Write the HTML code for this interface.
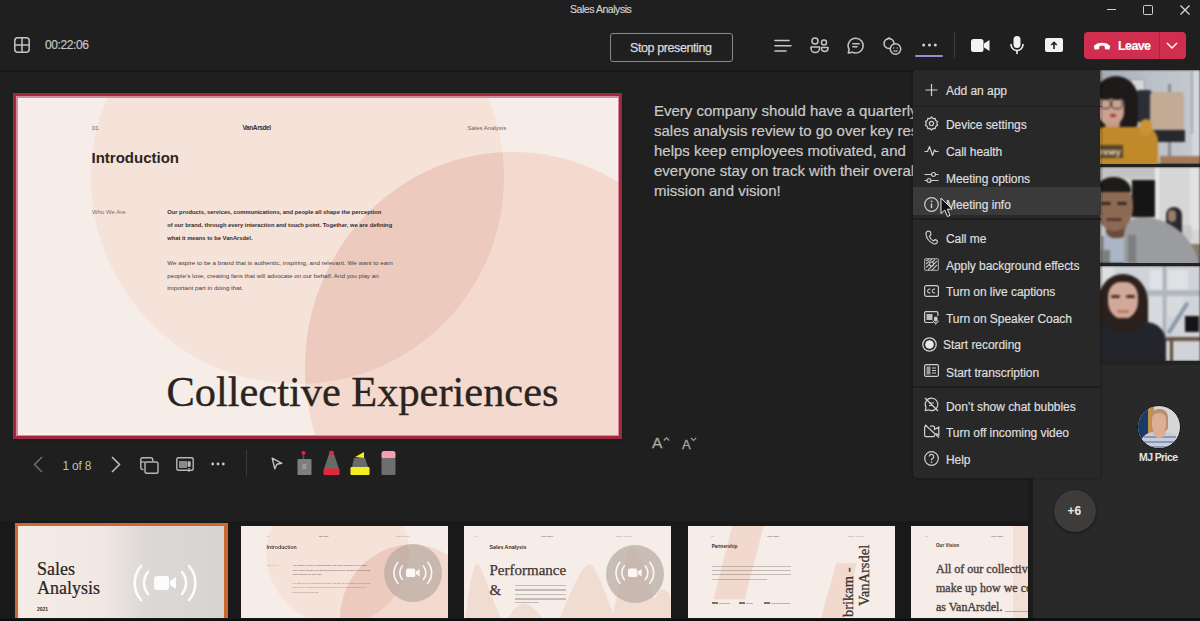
<!DOCTYPE html>
<html><head><meta charset="utf-8">
<style>
*{box-sizing:border-box;margin:0;padding:0}
html,body{width:1200px;height:621px;overflow:hidden;background:#1f1f1f;font-family:"Liberation Sans",sans-serif;position:relative}
.a{position:absolute}
.t{position:absolute;white-space:nowrap;line-height:1}
svg{position:absolute;overflow:visible}
</style></head><body>

<!-- top bar -->
<div class="a" style="left:0;top:0;width:1200px;height:70px;background:#1f1f1f"></div>
<div class="a" style="left:0;top:70px;width:1200px;height:2px;background:#161616"></div>
<div class="t" style="left:570px;top:4px;font-size:10.5px;color:#d4d4d4;letter-spacing:-0.45px;-webkit-text-stroke:0.15px #d4d4d4">Sales Analysis</div>

<!-- window controls -->
<div class="a" style="left:1107px;top:9px;width:9px;height:1.3px;background:#d0d0d0"></div>
<div class="a" style="left:1143px;top:5px;width:10px;height:10px;border:1.3px solid #d0d0d0;border-radius:1.5px"></div>
<svg style="left:1180px;top:5px" width="10" height="10" viewBox="0 0 10 10"><path d="M0.5 0.5L9.5 9.5M9.5 0.5L0.5 9.5" stroke="#d8d8d8" stroke-width="1.3"/></svg>

<!-- toolbar left -->
<svg style="left:14px;top:37px" width="16" height="16" viewBox="0 0 16 16"><rect x="0.8" y="0.8" width="14.4" height="14.4" rx="3" fill="none" stroke="#c4c4c4" stroke-width="1.5"/><path d="M8 1V15M1 8H15" stroke="#c4c4c4" stroke-width="1.5"/></svg>
<div class="t" style="left:45px;top:39px;font-size:12px;color:#c4c4c4;letter-spacing:-0.4px;-webkit-text-stroke:0.2px #c4c4c4">00:22:06</div>

<!-- stop presenting -->
<div class="a" style="left:610px;top:33px;width:123px;height:29px;border:1.5px solid #8a8a8a;border-radius:3px"></div>
<div class="t" style="left:630px;top:42px;font-size:12.5px;color:#dadada;letter-spacing:-0.4px;-webkit-text-stroke:0.25px #dadada">Stop presenting</div>

<!-- toolbar icons -->
<svg style="left:774px;top:39px" width="18" height="14" viewBox="0 0 18 14"><path d="M1 1.5H15M1 6.8H17M1 12H12" stroke="#c8c8c8" stroke-width="1.6" stroke-linecap="round"/></svg>
<svg style="left:810px;top:37px" width="19" height="17" viewBox="0 0 19 17"><circle cx="5" cy="4" r="3" fill="none" stroke="#c4c4c4" stroke-width="1.5"/><circle cx="14" cy="5.5" r="2.5" fill="none" stroke="#c4c4c4" stroke-width="1.5"/><path d="M1 10H9.5V11.5A4.2 4 0 0 1 1 11.5Z" fill="none" stroke="#c4c4c4" stroke-width="1.5" stroke-linejoin="round"/><path d="M11.5 10.5H18V11.8A3.3 3.2 0 0 1 11.5 11.8Z" fill="none" stroke="#c4c4c4" stroke-width="1.5" stroke-linejoin="round"/></svg>
<svg style="left:847px;top:37px" width="18" height="17" viewBox="0 0 18 17"><path d="M9 1.2A7.6 7.4 0 1 1 5.2 15.2L1.3 16L2.2 12.3A7.6 7.4 0 0 1 9 1.2Z" fill="none" stroke="#c4c4c4" stroke-width="1.5" stroke-linejoin="round"/><path d="M5.8 6.8H12.2M5.8 9.8H10.2" stroke="#c4c4c4" stroke-width="1.4" stroke-linecap="round"/></svg>
<svg style="left:883px;top:37px" width="19" height="18" viewBox="0 0 19 18"><circle cx="6" cy="6.5" r="5" fill="none" stroke="#c4c4c4" stroke-width="1.5"/><circle cx="12.5" cy="12" r="5.2" fill="#1f1f1f" stroke="#c4c4c4" stroke-width="1.5"/><path d="M10.5 13.5Q12.5 15 14.5 13.5" stroke="#c4c4c4" stroke-width="1.2" fill="none"/><circle cx="10.8" cy="11" r="0.7" fill="#c4c4c4"/><circle cx="14.2" cy="11" r="0.7" fill="#c4c4c4"/><path d="M4 2.5L6 0.8L8 2.5" stroke="#c4c4c4" stroke-width="1.3" fill="none"/></svg>
<svg style="left:922px;top:43px" width="15" height="4" viewBox="0 0 15 4"><circle cx="1.7" cy="2" r="1.5" fill="#d0d0d0"/><circle cx="7.5" cy="2" r="1.5" fill="#d0d0d0"/><circle cx="13.3" cy="2" r="1.5" fill="#d0d0d0"/></svg>
<div class="a" style="left:915px;top:54.5px;width:28px;height:2.5px;border-radius:1.5px;background:#8f8fd8"></div>
<div class="a" style="left:954px;top:32px;width:1px;height:26px;background:#3c3c3c"></div>

<svg style="left:971px;top:39px" width="19" height="13" viewBox="0 0 19 13"><rect x="0" y="0" width="12.5" height="13" rx="2.5" fill="#f2f2f2"/><path d="M13 4.5L18.5 1V12L13 8.5Z" fill="#f2f2f2"/></svg>
<svg style="left:1010px;top:36px" width="14" height="18" viewBox="0 0 14 18"><rect x="3.5" y="0" width="7" height="12" rx="3.5" fill="#f2f2f2"/><path d="M1 8.5A6 6 0 0 0 13 8.5" fill="none" stroke="#f2f2f2" stroke-width="1.6" stroke-linecap="round"/><path d="M7 14.5V17.5" stroke="#f2f2f2" stroke-width="1.6" stroke-linecap="round"/></svg>
<svg style="left:1045px;top:38px" width="18" height="14" viewBox="0 0 18 14"><rect x="0" y="0" width="18" height="14" rx="2" fill="#f2f2f2"/><path d="M9 11V4.5M6.3 7L9 4.3L11.7 7" stroke="#1f1f1f" stroke-width="1.6" fill="none"/></svg>

<!-- leave -->
<div class="a" style="left:1084px;top:32px;width:102px;height:26.5px;border-radius:4px;background:#cf2e4f"></div>
<div class="a" style="left:1159px;top:32px;width:1px;height:26.5px;background:#a82440"></div>
<svg style="left:1093px;top:41px" width="18" height="9" viewBox="0 0 18 9"><path d="M0.8 5C4 0.5 14 0.5 17.2 5L16.4 8.4L12 8.2L11.6 5.2C10 4.6 8 4.6 6.4 5.2L6 8.2L1.6 8.4Z" fill="#fff"/></svg>
<div class="t" style="left:1118px;top:39.5px;font-size:12.5px;font-weight:bold;color:#fff;letter-spacing:-0.6px;-webkit-text-stroke:0.1px #fff">Leave</div>
<svg style="left:1166px;top:42px" width="12" height="7" viewBox="0 0 12 7"><path d="M1 1L6 6L11 1" stroke="#fff" stroke-width="1.4" fill="none"/></svg>

<!-- slide -->
<div class="a" style="left:10px;top:90px;width:615px;height:352px;background:#17201b;border-radius:2px"></div>
<div class="a" style="left:13px;top:93px;width:609px;height:345.5px;background:#a22640"></div>
<div class="a" style="left:16px;top:96px;width:603px;height:339.5px;background:#d28a9c"></div>
<div class="a" id="slide" style="left:17.5px;top:97.5px;width:600.5px;height:337px;background:#f6ece8;overflow:hidden;box-shadow:inset 0 0 0 1.5px #fcf0ec">
  <div class="a" style="left:73.5px;top:-127px;width:413px;height:413px;border-radius:50%;background:#f5e2d9"></div>
  <div class="a" style="left:287.4px;top:54px;width:414.8px;height:432.8px;border-radius:50%;background:#f4d9ce;overflow:hidden">
    <div class="a" style="left:-213.9px;top:-181px;width:413px;height:413px;border-radius:50%;background:#eccabd"></div>
  </div>
  <div class="t" style="left:74.5px;top:27.5px;font-size:6px;color:#6c625e">01</div>
  <div class="t" style="left:225px;top:27px;font-size:6.5px;font-weight:bold;color:#3a302c;letter-spacing:-0.4px">VanArsdel</div>
  <div class="t" style="left:450px;top:27.5px;font-size:6px;color:#6c625e">Sales Analysis</div>
  <div class="t" style="left:74px;top:52.5px;font-size:15px;font-weight:bold;color:#2e2522">Introduction</div>
  <div class="t" style="left:74.5px;top:111.5px;font-size:6px;color:#7a6d68">Who We Are</div>
  <div class="a" style="left:149.7px;top:108.8px;font-size:5.8px;line-height:12.7px;font-weight:bold;color:#352c29;white-space:nowrap">Our products, services, communications, and people all shape the perception<br>of our brand, through every interaction and touch point. Together, we are defining<br>what it means to be VanArsdel.</div>
  <div class="a" style="left:149.7px;top:159.7px;font-size:6.25px;line-height:12.5px;color:#4a3f3b;white-space:nowrap">We aspire to be a brand that is authentic, inspiring, and relevant. We want to earn<br>people’s love, creating fans that will advocate on our behalf. And you play an<br>important part in doing that.</div>
  <div class="t" style="left:149px;top:273.5px;font-family:'Liberation Serif',serif;font-size:42.4px;color:#2a2421;-webkit-text-stroke:0.35px #2a2421">Collective Experiences</div>
</div>

<!-- notes -->
<div class="a" style="left:654px;top:101px;width:400px;font-size:15px;line-height:20px;color:#cacaca;white-space:nowrap;-webkit-text-stroke:0.2px #cacaca">Every company should have a quarterly<br>sales analysis review to go over key results. It<br>helps keep employees motivated, and<br>everyone stay on track with their overall<br>mission and vision!</div>
<div class="t" style="left:652px;top:435px;font-size:15.5px;color:#a8a8a8;-webkit-text-stroke:0.3px #a8a8a8">A</div>
<svg style="left:663px;top:437px" width="7" height="4" viewBox="0 0 7 4"><path d="M0.8 3.5L3.5 0.8L6.2 3.5" stroke="#a0a0a0" stroke-width="1.2" fill="none"/></svg>
<div class="t" style="left:682px;top:438px;font-size:13px;color:#a8a8a8;-webkit-text-stroke:0.3px #a8a8a8">A</div>
<svg style="left:690px;top:437px" width="7" height="4" viewBox="0 0 7 4"><path d="M0.8 0.8L3.5 3.5L6.2 0.8" stroke="#a0a0a0" stroke-width="1.2" fill="none"/></svg>

<!-- slide toolbar -->
<svg style="left:33px;top:456px" width="10" height="17" viewBox="0 0 10 17"><path d="M9 1L1.5 8.5L9 16" stroke="#6e6e6e" stroke-width="1.5" fill="none"/></svg>
<div class="t" style="left:62.5px;top:460px;font-size:12px;color:#bdbdbd;letter-spacing:-0.2px">1 of 8</div>
<svg style="left:111px;top:456px" width="10" height="17" viewBox="0 0 10 17"><path d="M1 1L8.5 8.5L1 16" stroke="#c0c0c0" stroke-width="1.5" fill="none"/></svg>
<svg style="left:140px;top:457px" width="19" height="17" viewBox="0 0 19 17"><path d="M3.5 12.5H2.5A1.7 1.7 0 0 1 0.8 10.8V2.5A1.7 1.7 0 0 1 2.5 0.8H11A1.7 1.7 0 0 1 12.7 2.5V4.2" fill="none" stroke="#b8b8b8" stroke-width="1.4"/><rect x="5" y="5" width="13" height="11.2" rx="1.8" fill="none" stroke="#b8b8b8" stroke-width="1.4"/><path d="M0.8 5H5" stroke="#b8b8b8" stroke-width="1.2"/></svg>
<svg style="left:176px;top:457px" width="18" height="16" viewBox="0 0 18 16"><rect x="0.8" y="0.8" width="16.4" height="12.4" rx="1.5" fill="none" stroke="#b8b8b8" stroke-width="1.4"/><rect x="3" y="4" width="8" height="7" fill="#8a8a8a"/><rect x="11.5" y="4" width="3.2" height="6" rx="1.6" fill="#b8b8b8"/><path d="M13 11V15" stroke="#b8b8b8" stroke-width="1.2"/></svg>
<svg style="left:211px;top:462px" width="14" height="4" viewBox="0 0 14 4"><circle cx="1.7" cy="2" r="1.4" fill="#c8c8c8"/><circle cx="7" cy="2" r="1.4" fill="#c8c8c8"/><circle cx="12.3" cy="2" r="1.4" fill="#c8c8c8"/></svg>
<div class="a" style="left:246px;top:450px;width:1px;height:26px;background:#3a3a3a"></div>
<svg style="left:271px;top:457px" width="12" height="13" viewBox="0 0 12 13"><path d="M1.2 1.2L10.8 6.3L5.8 7.2L3.8 11.8Z" fill="none" stroke="#c4c4c4" stroke-width="1.4" stroke-linejoin="round"/></svg>
<svg style="left:297px;top:450px" width="15" height="26" viewBox="0 0 15 26"><circle cx="6.5" cy="3" r="2" fill="#d8283a"/><path d="M6.5 5V9" stroke="#555" stroke-width="1.5"/><rect x="0.5" y="9" width="14" height="16" rx="1" fill="#7e7e7e"/><rect x="5.5" y="14" width="4" height="5" fill="#9a9a9a"/></svg>
<svg style="left:323px;top:450px" width="17" height="26" viewBox="0 0 17 26"><path d="M8.5 0.8C10.5 0.8 11 2.5 11 4L16 19H1L6 4C6 2.5 6.5 0.8 8.5 0.8Z" fill="#6a6a6a"/><path d="M8.5 0.8C10.5 0.8 11 2.5 11 5H6C6 2.5 6.5 0.8 8.5 0.8Z" fill="#e0283c"/><rect x="0.5" y="18.5" width="16" height="6.5" rx="1" fill="#e0283c"/></svg>
<svg style="left:350px;top:450px" width="20" height="26" viewBox="0 0 20 26"><path d="M5 7L14 2V8Z" fill="#f4f020"/><path d="M4 8H15L18 17H2Z" fill="#6a6a6a"/><rect x="0.5" y="17" width="19" height="8" rx="1" fill="#f4f020"/></svg>
<svg style="left:381px;top:450px" width="15" height="26" viewBox="0 0 15 26"><rect x="0.5" y="1" width="14" height="8" rx="2.5" fill="#f4a0b0"/><rect x="0.5" y="8" width="14" height="17" rx="1" fill="#6e6e6e"/></svg>

<!-- right panel -->
<div class="a" style="left:1033px;top:72px;width:167px;height:546px;background:#292929"></div>
<div class="a" style="left:1028px;top:478px;width:5px;height:140px;background:#1b1b1b"></div>
<div class="a" style="left:0;top:618px;width:1200px;height:3px;background:#0f0f0f"></div>

<!-- video tiles -->
<div class="a" style="left:1097px;top:70px;width:103px;height:295px;background:#232323"></div>
<div class="a" style="left:1100px;top:70px;width:100px;height:94px;overflow:hidden"><div class="a" style="left:0;top:0;width:100px;height:94px;filter:blur(0.8px)"><div class="a" style="left:0.0px;top:0.0px;width:100.0px;height:94.0px;background:linear-gradient(90deg,#a4abb4,#bac0c8 50%,#c6cacf);"></div><div class="a" style="left:92.0px;top:0.0px;width:8.0px;height:94.0px;background:#d4d7db;"></div><div class="a" style="left:91.0px;top:1.0px;width:2.0px;height:63.0px;background:#a4a8ae;"></div><div class="a" style="left:29.6px;top:9.0px;width:15.8px;height:16.0px;background:#d6d8da;border:1px solid #9a9ea4"></div><div class="a" style="left:36.0px;top:20.0px;width:16.0px;height:32.0px;background:#2b2e36;border-radius:4px 4px 2px 2px"></div><div class="a" style="left:68.0px;top:14.0px;width:2.6px;height:76.0px;background:#8a8d92;"></div><div class="a" style="left:50.0px;top:21.7px;width:34.0px;height:38.3px;background:#c2aa94;border-radius:4px 4px 1px 1px"></div><div class="a" style="left:51.7px;top:59.6px;width:33.3px;height:12.4px;background:#27282e;"></div><div class="a" style="left:60.0px;top:86.0px;width:40.0px;height:8.0px;background:#a27c5a;"></div><div class="a" style="left:-6.0px;top:6.0px;width:44.0px;height:56.0px;background:#1e1a1a;border-radius:50% 50% 20% 30%/40% 40% 20% 20%"></div><div class="a" style="left:-2.0px;top:26.4px;width:26.0px;height:28.6px;background:#c9a292;border-radius:30% 30% 45% 45%"></div><div class="a" style="left:-2.0px;top:24.0px;width:28.0px;height:5.0px;background:#1e1a1a;border-radius:0 0 3px 3px"></div><div class="a" style="left:-0.5px;top:29.0px;width:11.0px;height:9.5px;background:transparent;border:1.3px solid #3a3030;border-radius:4px"></div><div class="a" style="left:11.0px;top:29.0px;width:12.0px;height:9.5px;background:transparent;border:1.3px solid #3a3030;border-radius:4px"></div><div class="a" style="left:9.5px;top:43.5px;width:6.5px;height:3.0px;background:#b03232;border-radius:2px"></div><div class="a" style="left:5.0px;top:52.0px;width:15.0px;height:8.0px;background:#c49a88;border-radius:0 0 6px 6px"></div><div class="a" style="left:-6.0px;top:57.0px;width:64.0px;height:43.0px;background:#c08a2a;border-radius:10px 14px 0 0"></div><div class="a" style="left:40.0px;top:48.5px;width:12.0px;height:17.5px;background:#c89434;border-radius:6px"></div><div class="a" style="left:0.0px;top:75.4px;width:23.0px;height:12.6px;background:#5a4428;"></div><div class="t" style="left:0px;top:146.5px;font-size:9.5px;font-weight:bold;color:#e6dcc4;letter-spacing:-0.4px;margin-top:-70px">nney</div></div></div>
<div class="a" style="left:1100px;top:167px;width:100px;height:96px;overflow:hidden"><div class="a" style="left:0;top:0;width:100px;height:96px;filter:blur(0.8px)"><div class="a" style="left:0.0px;top:0.0px;width:100.0px;height:96.0px;background:#cfd0d0;"></div><div class="a" style="left:0.0px;top:0.0px;width:60.0px;height:11.0px;background:#c2c3c3;"></div><div class="a" style="left:31.8px;top:12.5px;width:23.4px;height:37.1px;background:#151515;"></div><div class="a" style="left:55.0px;top:0.0px;width:4.0px;height:53.0px;background:#e8e8e8;"></div><div class="a" style="left:59.0px;top:0.0px;width:41.0px;height:96.0px;background:#d6d6d6;"></div><div class="a" style="left:90.0px;top:0.0px;width:10.0px;height:63.0px;background:#e2e2e2;"></div><div class="a" style="left:78.6px;top:77.0px;width:21.4px;height:19.0px;background:#8a7c6c;"></div><div class="a" style="left:80.0px;top:57.6px;width:11.5px;height:16.1px;background:#c8c8c8;border-radius:3px"></div><div class="a" style="left:65.7px;top:40.0px;width:16.3px;height:35.0px;background:#2a2830;border-radius:8px 8px 3px 3px"></div><div class="a" style="left:68.0px;top:43.0px;width:8.0px;height:12.0px;background:#9a7c66;border-radius:4px"></div><div class="a" style="left:-10.0px;top:69.0px;width:22.0px;height:27.0px;background:#8c8e92;"></div><div class="a" style="left:4.0px;top:57.0px;width:32.0px;height:39.0px;background:#aab6c6;"></div><div class="a" style="left:6.0px;top:53.0px;width:21.0px;height:18.0px;background:#6a4a3a;border-radius:0 0 8px 8px"></div><div class="a" style="left:-4.0px;top:15.0px;width:37.0px;height:49.0px;background:#8e6a55;border-radius:40% 45% 48% 48%"></div><div class="a" style="left:-4.0px;top:10.0px;width:35.0px;height:15.0px;background:#1e1a18;border-radius:50% 50% 0 0/90% 90% 0 0"></div><div class="a" style="left:1.0px;top:35.0px;width:10.0px;height:3.0px;background:#3a2820;border-radius:2px"></div><div class="a" style="left:17.0px;top:35.0px;width:10.0px;height:3.0px;background:#3a2820;border-radius:2px"></div><div class="a" style="left:6.0px;top:51.0px;width:16.0px;height:3.0px;background:#5a3a2e;border-radius:2px"></div><div class="a" style="left:24.0px;top:49.6px;width:76.0px;height:83.4px;background:#9a9ca0;border-radius:18px 60px 0 0"></div><div class="a" style="left:28.0px;top:68.0px;width:8.0px;height:28.0px;background:#7c7e82;"></div><div class="a" style="left:-10.0px;top:83.0px;width:20.0px;height:13.0px;background:#7c7e82;"></div></div></div>
<div class="a" style="left:1100px;top:266px;width:100px;height:95px;overflow:hidden"><div class="a" style="left:0;top:0;width:100px;height:95px;filter:blur(0.8px)"><div class="a" style="left:0.0px;top:0.0px;width:100.0px;height:95.0px;background:#d0d4d8;"></div><div class="a" style="left:0.0px;top:0.0px;width:14.0px;height:95.0px;background:#dedfe0;"></div><div class="a" style="left:50.0px;top:4.0px;width:12.0px;height:20.0px;background:#dfe2e4;"></div><div class="a" style="left:68.0px;top:4.0px;width:20.0px;height:20.0px;background:#dfe2e4;"></div><div class="a" style="left:50.0px;top:31.0px;width:12.0px;height:35.0px;background:#d8dbde;"></div><div class="a" style="left:68.0px;top:31.0px;width:17.0px;height:18.0px;background:#d8dbde;"></div><div class="a" style="left:62.5px;top:0.0px;width:3.2px;height:95.0px;background:#a8b0b8;"></div><div class="a" style="left:40.0px;top:23.8px;width:60.0px;height:6.4px;background:#b2b8be;"></div><div class="a" style="left:60.0px;top:50.0px;width:36.0px;height:4.0px;background:#8898a8;transform:rotate(-58deg)"></div><div class="a" style="left:85.0px;top:49.6px;width:13.7px;height:16.1px;background:#151515;"></div><div class="a" style="left:65.7px;top:70.5px;width:34.3px;height:4.8px;background:#6a5444;"></div><div class="a" style="left:70.0px;top:75.0px;width:3.0px;height:20.0px;background:#5a4636;"></div><div class="a" style="left:-2.0px;top:7.7px;width:50.0px;height:91.3px;background:#2b201c;border-radius:50% 50% 10% 10%/30% 30% 10% 10%"></div><div class="a" style="left:7.7px;top:15.7px;width:30.6px;height:37.1px;background:#d2a898;border-radius:40% 40% 48% 48%"></div><div class="a" style="left:11.0px;top:29.0px;width:9.0px;height:3.0px;background:#4a3028;border-radius:2px"></div><div class="a" style="left:26.0px;top:29.0px;width:9.0px;height:3.0px;background:#4a3028;border-radius:2px"></div><div class="a" style="left:17.0px;top:43.5px;width:12.0px;height:3.0px;background:#b87a70;border-radius:2px"></div><div class="a" style="left:-5.0px;top:56.0px;width:71.0px;height:48.0px;background:#24242c;border-radius:14px 20px 0 0"></div><div class="a" style="left:8.0px;top:52.0px;width:32.0px;height:14.0px;background:#2b201c;border-radius:0 0 12px 12px"></div></div></div>

<!-- avatar -->
<div class="a" style="left:1136.5px;top:404.5px;width:44px;height:44px;border-radius:50%;overflow:hidden;background:#d6d6d4;border:1px solid #151515">
  <div class="a" style="left:0;top:0;width:44px;height:44px;filter:blur(0.7px)">
  <div class="a" style="left:0;top:0;width:10.5px;height:44px;background:#1c3a68"></div>
  <div class="a" style="left:10.5px;top:0;width:5.5px;height:40px;background:#c0924a"></div>
  <div class="a" style="left:13px;top:3px;width:17px;height:22px;border-radius:8px 8px 4px 4px;background:#b89070"></div>
  <div class="a" style="left:14.5px;top:7px;width:14px;height:20px;border-radius:7px 7px 8px 8px;background:#dcae94"></div>
  <div class="a" style="left:2px;top:26px;width:40px;height:22px;border-radius:14px 14px 0 0;background:#c6cedc"></div>
  <div class="a" style="left:6px;top:30px;width:32px;height:2px;background:#8c98b4;box-shadow:0 5px 0 #8c98b4,0 10px 0 #8c98b4"></div>
  <div class="a" style="left:15px;top:25px;width:13px;height:7px;border-radius:0 0 7px 7px;background:#dcae94"></div>
  </div>
</div>
<div class="t" style="left:1139px;top:452px;font-size:10.5px;font-weight:bold;color:#e4e4e4;letter-spacing:-0.6px">MJ Price</div>
<div class="a" style="left:1053.5px;top:489.5px;width:42px;height:42px;border-radius:50%;background:#3e3c3b;box-shadow:0 1px 3px rgba(0,0,0,.5)"></div>
<div class="t" style="left:1067.5px;top:504.5px;font-size:12px;font-weight:bold;color:#eaeaea;letter-spacing:0px">+6</div>

<!-- menu -->
<div class="a" style="left:911px;top:69px;width:192px;height:411px;border-radius:5px;background:rgba(0,0,0,0.12)"></div>
<div class="a" id="menu" style="left:913px;top:70px;width:187px;height:407.5px;background:#282828;border-radius:3px">
  <div class="a" style="left:0;top:35.5px;width:188px;height:1.5px;background:#1e1e1e"></div>
  <div class="a" style="left:0;top:117px;width:188px;height:27.5px;background:#3a3a3a"></div>
  <div class="a" style="left:0;top:148px;width:188px;height:1.5px;background:#1e1e1e"></div>
  <div class="a" style="left:0;top:316px;width:188px;height:1.5px;background:#1e1e1e"></div>
</div>
<div class="a" style="left:946px;top:0;font-size:12px;color:#dedede;letter-spacing:-0.05px;-webkit-text-stroke:0.2px #dedede">
  <div class="t" style="left:0;top:84.5px">Add an app</div>
  <div class="t" style="left:0;top:118.5px">Device settings</div>
  <div class="t" style="left:0;top:146px">Call health</div>
  <div class="t" style="left:0;top:172.5px">Meeting options</div>
  <div class="t" style="left:0;top:198.5px">Meeting info</div>
  <div class="t" style="left:0;top:233px">Call me</div>
  <div class="t" style="left:0;top:259.5px">Apply background effects</div>
  <div class="t" style="left:0;top:286px">Turn on live captions</div>
  <div class="t" style="left:0;top:312.5px">Turn on Speaker Coach</div>
  <div class="t" style="left:-3px;top:339px">Start recording</div>
  <div class="t" style="left:0;top:366.5px">Start transcription</div>
  <div class="t" style="left:0;top:400.5px">Don’t show chat bubbles</div>
  <div class="t" style="left:0;top:427px">Turn off incoming video</div>
  <div class="t" style="left:0;top:453.5px">Help</div>
</div>
<!-- menu icons -->
<svg style="left:925px;top:84px" width="13" height="12" viewBox="0 0 13 12"><path d="M6.5 0V12M0.5 6H12.5" stroke="#cfcfcf" stroke-width="1.2"/></svg>
<svg style="left:924px;top:116px" width="15" height="15" viewBox="0 0 15 15"><path d="M7.5 1L9 2.6L11.2 2.3L11.6 4.5L13.6 5.6L12.7 7.5L13.6 9.4L11.6 10.5L11.2 12.7L9 12.4L7.5 14L6 12.4L3.8 12.7L3.4 10.5L1.4 9.4L2.3 7.5L1.4 5.6L3.4 4.5L3.8 2.3L6 2.6Z" fill="none" stroke="#cfcfcf" stroke-width="1.2" stroke-linejoin="round"/><circle cx="7.5" cy="7.5" r="2.1" fill="none" stroke="#cfcfcf" stroke-width="1.2"/></svg>
<svg style="left:924px;top:145px" width="15" height="12" viewBox="0 0 15 12"><path d="M0.5 6.5H3.5L5.5 1.5L8.5 10.5L10.5 5L11.8 6.5H14.5" fill="none" stroke="#cfcfcf" stroke-width="1.2" stroke-linejoin="round"/></svg>
<svg style="left:924px;top:171px" width="15" height="13" viewBox="0 0 15 13"><path d="M0.5 3.5H14.5M0.5 9.5H14.5" stroke="#cfcfcf" stroke-width="1.2"/><circle cx="9.5" cy="3.5" r="2" fill="#2a2a2a" stroke="#cfcfcf" stroke-width="1.2"/><circle cx="5" cy="9.5" r="2" fill="#3a3a3a" stroke="#cfcfcf" stroke-width="1.2"/></svg>
<svg style="left:924px;top:197px" width="15" height="15" viewBox="0 0 15 15"><circle cx="7.5" cy="7.5" r="6.8" fill="none" stroke="#cfcfcf" stroke-width="1.2"/><path d="M7.5 6.5V11" stroke="#cfcfcf" stroke-width="1.4"/><circle cx="7.5" cy="4.3" r="0.9" fill="#cfcfcf"/></svg>
<svg style="left:925px;top:230px" width="13" height="15" viewBox="0 0 13 15"><path d="M3 1L5.2 1.6L6 4.6L4.4 6.2C5 8.4 6.6 10.2 8.6 11L10.2 9.5L12.2 10.6L12.2 12.5C11.5 14 9.5 14.2 8 13.5C4.5 11.8 1.7 8.2 1 4.5C0.8 3 1.6 1.5 3 1Z" fill="none" stroke="#cfcfcf" stroke-width="1.2" stroke-linejoin="round"/></svg>
<svg style="left:924px;top:258px" width="15" height="13" viewBox="0 0 15 13"><rect x="0.6" y="0.6" width="13.8" height="11.8" rx="1.5" fill="none" stroke="#9a9a9a" stroke-width="1.2"/><path d="M2 3L5 1M2 6L8 1M2 9.5L11 1.5M4 12L13 3M8 12L13 7" stroke="#bdbdbd" stroke-width="1.1"/><circle cx="7.5" cy="6" r="2" fill="#2a2a2a" stroke="#cfcfcf" stroke-width="1.1"/></svg>
<svg style="left:924px;top:285px" width="15" height="12" viewBox="0 0 15 12"><rect x="0.6" y="0.6" width="13.8" height="10.8" rx="2" fill="none" stroke="#cfcfcf" stroke-width="1.2"/><path d="M6.3 4.3A1.9 1.9 0 1 0 6.3 7.7M11 4.3A1.9 1.9 0 1 0 11 7.7" fill="none" stroke="#cfcfcf" stroke-width="1.1"/></svg>
<svg style="left:924px;top:311px" width="15" height="14" viewBox="0 0 15 14"><path d="M9 11.5H2A1.4 1.4 0 0 1 0.6 10.1V2A1.4 1.4 0 0 1 2 0.6H12.5A1.4 1.4 0 0 1 13.9 2V5" fill="none" stroke="#cfcfcf" stroke-width="1.2"/><rect x="2.5" y="3" width="6" height="6" fill="#bdbdbd"/><rect x="10" y="5.5" width="3.5" height="5" rx="1.7" fill="#cfcfcf"/><path d="M9.2 9.5A2.5 2.5 0 0 0 14.3 9.5M11.75 12V13.8" stroke="#cfcfcf" stroke-width="1" fill="none"/></svg>
<svg style="left:922px;top:337px" width="15" height="15" viewBox="0 0 15 15"><circle cx="7.5" cy="7.5" r="6.7" fill="none" stroke="#d0d0d0" stroke-width="1.3"/><circle cx="7.5" cy="7.5" r="4.3" fill="#e8e8e8"/></svg>
<svg style="left:924px;top:364px" width="15" height="13" viewBox="0 0 15 13"><rect x="0.6" y="0.6" width="13.8" height="11.8" rx="1.5" fill="none" stroke="#cfcfcf" stroke-width="1.2"/><rect x="2.5" y="2.5" width="4" height="8" fill="#9a9a9a"/><path d="M8 4H12M8 6.5H12M8 9H12" stroke="#cfcfcf" stroke-width="1.1"/></svg>
<svg style="left:924px;top:397px" width="15" height="15" viewBox="0 0 15 15"><path d="M7.5 1.2A6.3 6.2 0 1 1 4.5 12.8L1.2 13.6L2 10.4A6.3 6.2 0 0 1 7.5 1.2Z" fill="none" stroke="#cfcfcf" stroke-width="1.2" stroke-linejoin="round"/><path d="M1 1L14 14" stroke="#cfcfcf" stroke-width="1.2"/><path d="M5 6H10M5 8.5H8" stroke="#cfcfcf" stroke-width="1"/></svg>
<svg style="left:924px;top:424px" width="16" height="14" viewBox="0 0 16 14"><path d="M10.5 10.5V11.5A1.2 1.2 0 0 1 9.3 12.7H2A1.4 1.4 0 0 1 0.6 11.3V3.5A1.4 1.4 0 0 1 2 2.1H3M6 2.1H9.3A1.2 1.2 0 0 1 10.5 3.3V5.5L14.8 3V11.2L12 9.5" fill="none" stroke="#cfcfcf" stroke-width="1.2"/><path d="M1 0.8L15 13.5" stroke="#cfcfcf" stroke-width="1.2"/></svg>
<svg style="left:924px;top:451px" width="15" height="15" viewBox="0 0 15 15"><circle cx="7.5" cy="7.5" r="6.8" fill="none" stroke="#cfcfcf" stroke-width="1.2"/><path d="M5.3 5.6A2.2 2.2 0 1 1 8.4 7.6C7.8 7.9 7.5 8.3 7.5 9V9.5" fill="none" stroke="#cfcfcf" stroke-width="1.2"/><circle cx="7.5" cy="11.3" r="0.8" fill="#cfcfcf"/></svg>

<!-- cursor -->
<svg style="left:940px;top:197px" width="14" height="21" viewBox="0 0 14 21"><path d="M1 1V16.5L4.8 13L7.5 19.5L10 18.4L7.3 12.2H12.2Z" fill="#111" stroke="#e8e8e8" stroke-width="1" stroke-linejoin="round"/></svg>

<!-- thumbnails -->
<div class="a" style="left:0;top:520.5px;width:1028px;height:98px;background:#1a1919"></div>
<div class="a" style="left:14.5px;top:522.5px;width:213px;height:95.5px;background:#cc6830"></div>
<div class="a" style="left:17.5px;top:525.5px;width:206.5px;height:92.5px;overflow:hidden;background:linear-gradient(90deg,#f5ebe7 0%,#f1e8e4 40%,#dcd8d5 62%,#d6d4d2 100%)">
  <div class="t" style="left:19.5px;top:34px;font-family:'Liberation Serif',serif;font-size:18px;line-height:19px;color:#2a2421;-webkit-text-stroke:0.2px #2a2421;white-space:normal;width:100px">Sales<br>Analysis</div>
  <div class="t" style="left:19.5px;top:81.5px;font-size:5px;font-weight:bold;color:#3a302c">2021</div>
  <svg style="left:115.5px;top:38.5px" width="64.0" height="38.0" viewBox="0 0 64 38"><g fill="none" stroke="rgba(255,255,255,0.92)" stroke-width="2.6" stroke-linecap="round"><path d="M8 2A26 26 0 0 0 8 36"/><path d="M15 8A17 17 0 0 0 15 30"/><path d="M56 2A26 26 0 0 1 56 36"/><path d="M49 8A17 17 0 0 1 49 30"/></g><rect x="21" y="12" width="15" height="14" rx="3" fill="rgba(255,255,255,0.92)"/><path d="M37 17L43 13V25L37 21Z" fill="rgba(255,255,255,0.92)"/></svg>
</div>

<div class="a" style="left:241px;top:526px;width:207px;height:92px;overflow:hidden;background:#f6ece8">
  <div class="a" style="left:0;top:0;width:600px;height:336px;transform:scale(0.345);transform-origin:0 0">
  <div class="a" style="left:73.5px;top:-127px;width:413px;height:413px;border-radius:50%;background:#f5e2d9"></div>
  <div class="a" style="left:287.4px;top:54px;width:414.8px;height:432.8px;border-radius:50%;background:#f4d9ce;overflow:hidden">
    <div class="a" style="left:-213.9px;top:-181px;width:413px;height:413px;border-radius:50%;background:#eccabd"></div>
  </div>
  <div class="t" style="opacity:.6;left:74.5px;top:27.5px;font-size:6px;color:#6c625e">01</div>
  <div class="t" style="opacity:.6;left:225px;top:27px;font-size:6.5px;font-weight:bold;color:#3a302c;letter-spacing:-0.4px">VanArsdel</div>
  <div class="t" style="opacity:.6;left:450px;top:27.5px;font-size:6px;color:#6c625e">Sales Analysis</div>
  <div class="t" style="opacity:.85;left:74px;top:52.5px;font-size:15px;font-weight:bold;color:#2e2522">Introduction</div>
  <div class="t" style="opacity:.6;left:74.5px;top:111.5px;font-size:6px;color:#7a6d68">Who We Are</div>
  <div class="a" style="opacity:.6;left:149.7px;top:108.8px;font-size:5.8px;line-height:12.7px;font-weight:bold;color:#352c29;white-space:nowrap">Our products, services, communications, and people all shape the perception<br>of our brand, through every interaction and touch point. Together, we are defining<br>what it means to be VanArsdel.</div>
  <div class="a" style="opacity:.6;left:149.7px;top:159.7px;font-size:6.25px;line-height:12.5px;color:#4a3f3b;white-space:nowrap">We aspire to be a brand that is authentic, inspiring, and relevant. We want to earn<br>people’s love, creating fans that will advocate on our behalf. And you play an<br>important part in doing that.</div>
  </div>
  <div class="a" style="left:143px;top:17.5px;width:58px;height:58px;border-radius:50%;background:rgba(185,170,162,0.72)"></div>
  <svg style="left:152.16px;top:34.92px" width="39.68" height="23.56" viewBox="0 0 64 38"><g fill="none" stroke="rgba(255,255,255,0.9)" stroke-width="2.6" stroke-linecap="round"><path d="M8 2A26 26 0 0 0 8 36"/><path d="M15 8A17 17 0 0 0 15 30"/><path d="M56 2A26 26 0 0 1 56 36"/><path d="M49 8A17 17 0 0 1 49 30"/></g><rect x="21" y="12" width="15" height="14" rx="3" fill="rgba(255,255,255,0.9)"/><path d="M37 17L43 13V25L37 21Z" fill="rgba(255,255,255,0.9)"/></svg>
</div>

<div class="a" style="left:464px;top:526px;width:207px;height:92px;overflow:hidden;background:#f6ece8">
  <svg style="left:0;top:0" width="207" height="92" viewBox="0 0 207 92"><g fill="#f1dcd2"><path d="M1 92C5 70 8 38 13 38C18 38 26 70 37 92Z"/><path d="M44 92C50 82 55 77.6 60 77.6C65 77.6 72 84 78 92Z"/><path d="M96 92C108 64 118 38.6 125.8 38.6C132 38.6 142 70 151 92Z"/><path d="M148 92C156 60 162 20.8 168.4 20.8C175 20.8 186 60 197 92Z"/><path d="M182 92C188 76 194 63.4 198.6 63.4C203 63.4 207 70 207 72V92Z"/></g></svg>
  <div class="t" style="left:11px;top:10px;font-size:2.5px;color:#999">01</div>
  <div class="t" style="left:77px;top:10px;font-size:2.5px;font-weight:bold;color:#777">VanArsdel</div>
  <div class="t" style="left:152px;top:10px;font-size:2.5px;color:#999">Sales Analysis</div>
  <div class="t" style="left:25.5px;top:18.5px;font-size:5.3px;font-weight:bold;color:#3a302c">Sales Analysis</div>
  <div class="t" style="left:25.5px;top:37px;font-family:'Liberation Serif',serif;font-size:15px;color:#3d3532;-webkit-text-stroke:0.25px #3d3532">Performance</div>
  <div class="t" style="left:25.5px;top:57px;font-family:'Liberation Serif',serif;font-size:15px;color:#3d3532;-webkit-text-stroke:0.25px #3d3532">&amp;</div>
  <div class="a" style="left:51px;top:58.5px;width:51px;height:18px;background:repeating-linear-gradient(180deg,rgba(80,70,66,.3) 0 1.2px,transparent 1.2px 4.45px)"></div>
  <div class="a" style="left:51px;top:76.3px;width:23.5px;height:1.2px;background:rgba(80,70,66,.3)"></div>
  <div class="a" style="left:142px;top:18.5px;width:58px;height:58px;border-radius:50%;background:rgba(185,170,162,0.72)"></div>
  <svg style="left:150.66px;top:35.42px" width="39.68" height="23.56" viewBox="0 0 64 38"><g fill="none" stroke="rgba(255,255,255,0.9)" stroke-width="2.6" stroke-linecap="round"><path d="M8 2A26 26 0 0 0 8 36"/><path d="M15 8A17 17 0 0 0 15 30"/><path d="M56 2A26 26 0 0 1 56 36"/><path d="M49 8A17 17 0 0 1 49 30"/></g><rect x="21" y="12" width="15" height="14" rx="3" fill="rgba(255,255,255,0.9)"/><path d="M37 17L43 13V25L37 21Z" fill="rgba(255,255,255,0.9)"/></svg>
</div>

<div class="a" style="left:688px;top:526px;width:206.5px;height:92px;overflow:hidden;background:#f6ece8">
  <svg style="left:0;top:0" width="207" height="92" viewBox="0 0 207 92"><path d="M44.3 0H75.6L56.8 73.3H25.5Z" fill="#f2d9ce"/><path d="M148.2 37.3H168.8L154.5 92.5H132.8Z" fill="#f2d9ce"/></svg>
  <div class="t" style="left:23px;top:10px;font-size:2.5px;color:#999">01</div>
  <div class="t" style="left:79px;top:10px;font-size:2.5px;font-weight:bold;color:#777">VanArsdel</div>
  <div class="t" style="left:160px;top:10px;font-size:2.5px;color:#999">Sales Analysis</div>
  <div class="t" style="left:23.7px;top:18.5px;font-size:4.6px;font-weight:bold;color:#3a302c">Partnership</div>
  <div class="a" style="left:23.7px;top:39.5px;width:79px;height:14px;background:repeating-linear-gradient(180deg,rgba(80,70,66,.3) 0 1px,transparent 1px 4.25px)"></div>
  <div class="a" style="left:78.5px;top:51.5px;width:26px;height:2.5px;background:#f6ece8"></div>
  <div class="a" style="left:23.7px;top:75.5px;width:6px;height:2px;background:rgba(70,60,56,.7)"></div><div class="a" style="left:30.5px;top:76.5px;width:11px;height:0.8px;background:rgba(80,70,66,.35)"></div>
  <div class="a" style="left:50.5px;top:75.5px;width:6px;height:2px;background:rgba(70,60,56,.7)"></div><div class="a" style="left:57.5px;top:76.5px;width:7px;height:0.8px;background:rgba(80,70,66,.35)"></div>
  <div class="a" style="left:76px;top:75.5px;width:6px;height:2px;background:rgba(70,60,56,.7)"></div><div class="a" style="left:83px;top:76.5px;width:19px;height:0.8px;background:rgba(80,70,66,.35)"></div>
  <div class="a" id="v1" style="left:153px;top:90.5px;transform:rotate(-90deg);transform-origin:0 0;font-family:'Liberation Serif',serif;font-size:14.5px;line-height:1;color:#3d3532;-webkit-text-stroke:0.3px #3d3532;white-space:nowrap">brikam -</div>
  <div class="a" id="v2" style="left:169px;top:80px;transform:rotate(-90deg);transform-origin:0 0;font-family:'Liberation Serif',serif;font-size:14.5px;line-height:1;color:#3d3532;-webkit-text-stroke:0.3px #3d3532;white-space:nowrap">VanArsdel</div>
</div>

<div class="a" style="left:911px;top:525.5px;width:117px;height:92.5px;overflow:hidden;background:#f6ece8">
  <div class="a" style="left:102px;top:0;width:15px;height:92.5px;background:#f4dfd6"></div>
  <div class="t" style="left:14px;top:10px;font-size:2.5px;color:#999">01</div>
  <div class="t" style="left:80px;top:10px;font-size:2.5px;font-weight:bold;color:#777">VanArsdel</div>
  <div class="t" style="left:25px;top:18px;font-size:4.6px;font-weight:bold;color:#3a302c">Our Vision</div>
  <div class="a" style="left:25px;top:34px;width:200px;font-family:'Liberation Serif',serif;font-size:12px;line-height:19px;color:#4a403c;-webkit-text-stroke:0.35px #4a403c;white-space:nowrap">All of our collective<br>make up how we co<br>as VanArsdel.</div>
  <div class="a" style="left:94px;top:85.5px;width:23px;height:0.8px;background:rgba(120,110,106,.5)"></div>
</div>

<!-- main -->

</body></html>
